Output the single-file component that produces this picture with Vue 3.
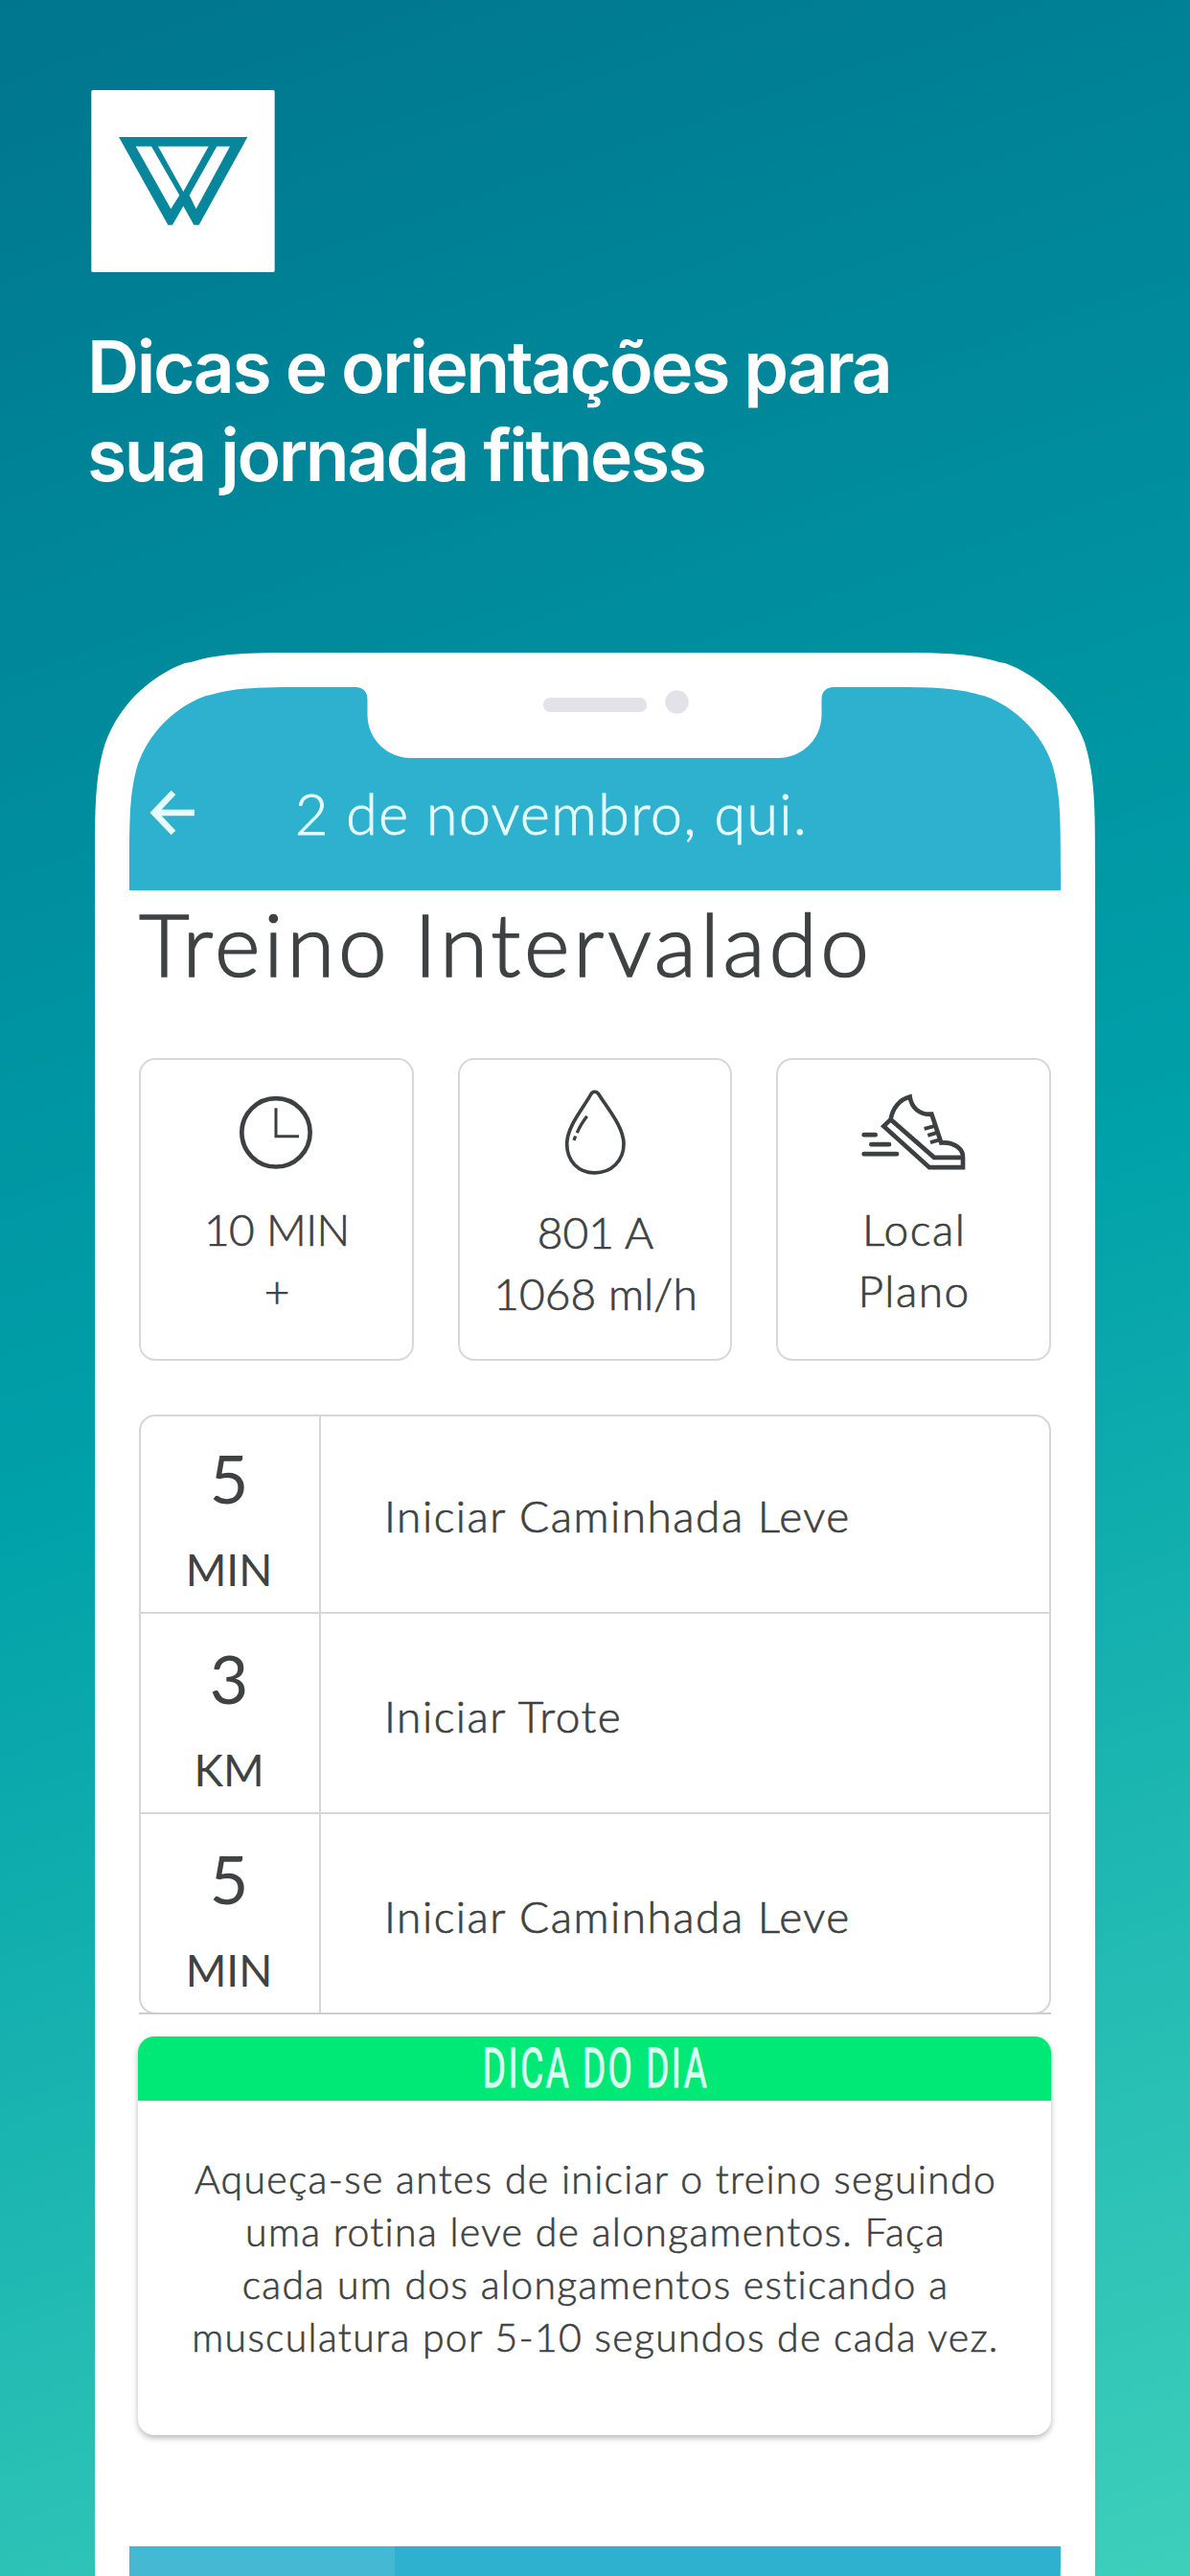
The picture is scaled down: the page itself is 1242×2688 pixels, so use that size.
<template>
  <div class="page">
    <header class="intro">
      <svg class="logo" viewBox="0 0 574 570">
        <rect width="574" height="570" rx="5" fill="#fff" />
        <path
          fill="#08869b"
          fill-rule="evenodd"
          d="M86 147H489L337 422H321L288 363L254 422H240ZM139 176L249 372L276 329L188 176ZM209 176L288 318L367 176ZM393 176L307 329L328 372L434 176Z"
        />
      </svg>
      <h1 class="headline">Dicas e orientações para<br />sua jornada fitness</h1>
    </header>

    <div class="phone">
      <div class="screen">
        <div class="top-bar">
          <svg class="back" viewBox="0 0 48 48">
            <path d="M24 3L4 24L24 45M4 24H46" />
          </svg>
          <span class="date">2 de novembro, qui.</span>
        </div>
        <svg class="notch" viewBox="0 0 499 75">
          <path d="M0 -1V0C8 0 12.500 5 12.500 13V29C12.500 54 33 74 58 74H441C466 74 486.500 54 486.500 29V13C486.500 5 491 0 499 0V-1Z" fill="#fff" />
          <rect x="196" y="11" width="108" height="15" rx="7" fill="#e3e2e8" />
          <circle cx="335.500" cy="15.500" r="12.200" fill="#e3e2e8" />
        </svg>

        <main class="content">
          <h2 class="title">Treino Intervalado</h2>

          <div class="cards">
            <div v-for="card in cards" :key="card.icon" :class="['card', card.icon]">
              <svg v-if="card.icon === 'clock'" class="card-icon" viewBox="0 0 360 290">
                <circle cx="180" cy="146" r="107" stroke-width="14" />
                <path d="M180 69V158H252" stroke-width="9" />
              </svg>
              <svg v-else-if="card.icon === 'drop'" class="card-icon" viewBox="0 0 360 290">
                <path d="M166 28C173 15 185 15 193 28C215 65 270 127 270 182C270 235 230 272 179 272C128 272 92 235 92 182C92 127 145 67 166 28Z" stroke-width="11" />
                <path d="M155 95Q134 122 124 147M119 157L114 170" stroke-width="10" />
              </svg>
              <svg v-else class="card-icon" viewBox="0 0 360 290">
                <path d="M23 153H59M46 183H102M23 213H126" stroke-width="14" stroke-linecap="round" />
                <path d="M107 105C112 70 135 42 167 34C172 70 200 92 235 88L265 178C308 174 335 200 333 225V255H228L85 126L107 105L243 224H333" stroke-width="14" />
                <path d="M212 134L243 126M223 155L252 146M231 177L262 168" stroke-width="12" />
              </svg>
              <span v-for="line in card.lines" :key="line" class="card-line">{{ line }}</span>
            </div>
          </div>

          <div class="steps">
            <div v-for="(step, i) in steps" :key="i" class="step">
              <div class="amount">
                <span class="value">{{ step.value }}</span>
                <span class="unit">{{ step.unit }}</span>
              </div>
              <div class="label">{{ step.label }}</div>
            </div>
          </div>
          <div class="divider"></div>

          <section class="tip">
            <div class="tip-title"><span>DICA DO DIA</span></div>
            <p class="tip-text">
              Aqueça-se antes de iniciar o treino seguindo<br />
              uma rotina leve de alongamentos. Faça<br />
              cada um dos alongamentos esticando a<br />
              musculatura por 5-10 segundos de cada vez.
            </p>
          </section>
        </main>

        <nav class="tabs">
          <div class="tab active"></div>
        </nav>
      </div>
    </div>
  </div>
</template>

<script setup>
const cards = [
  { icon: 'clock', lines: ['10 MIN', '+'] },
  { icon: 'drop', lines: ['801 A', '1068 ml/h'] },
  { icon: 'shoe', lines: ['Local', 'Plano'] }
];

const steps = [
  { value: 5, unit: 'MIN', label: 'Iniciar Caminhada Leve' },
  { value: 3, unit: 'KM', label: 'Iniciar Trote' },
  { value: 5, unit: 'MIN', label: 'Iniciar Caminhada Leve' }
];
</script>

<style>
body {
  margin: 0;
}
</style>

<style scoped>
.page {
  width: 1242px;
  height: 2688px;
  overflow: hidden;
  background: linear-gradient(161deg, #00758e 0%, #00a1a9 51%, #3fd0bb 101%);
  font-family: Lato, "Open Sans", sans-serif;
  color: #3e4242;
}

.intro {
  height: 681px;
  box-sizing: border-box;
  padding: 94px 0 0 95px;
}

.logo {
  display: block;
  width: 192px;
  height: 190px;
}

.headline {
  margin: 53px 0 0 -4px;
  font-family: Inter, sans-serif;
  font-weight: 600;
  font-size: 75px;
  line-height: 92px;
  letter-spacing: -2.45px;
  color: #fff;
}

/* body and screen both use a continuous-curvature corner */
.phone {
  width: 1044px;
  height: 2194px;
  box-sizing: border-box;
  margin-left: 99px;
  padding: 36px;
  background: #fff;
  clip-path: path("M228 0H816C882 0 914 0 944 10L950 11C988 25 1019 56 1033 94C1044 129 1044 162 1044 228V1966C1044 2032 1044 2065 1033 2100C1019 2138 988 2169 950 2183H94C56 2169 25 2138 11 2100C0 2065 0 2032 0 1966V228C0 162 0 129 11 94C25 56 56 25 94 11L100 10C130 0 162 0 228 0Z");
}

.screen {
  position: relative;
  display: flex;
  flex-direction: column;
  height: 2122px;
  clip-path: path("M194 0H778C834 0 861 0 887 8L892 9C925 21 951 47 963 80C972 110 972 138 972 194V1928C972 1984 972 2012 963 2042C951 2075 925 2101 892 2113H80C47 2101 21 2075 9 2042C0 2012 0 1984 0 1928V194C0 138 0 110 9 80C21 47 47 21 80 9L85 8C111 0 138 0 194 0Z");
}

.top-bar {
  display: flex;
  align-items: flex-start;
  height: 212px;
  box-sizing: border-box;
  padding: 93px 0 0 22px;
  background: #2db1ce;
  color: #e6fcff;
}

.back {
  width: 48px;
  height: 48px;
  margin-top: 14px;
  fill: none;
  stroke: #e6fcff;
  stroke-width: 6.5;
}

.date {
  margin-left: 103px;
  font-weight: 300;
  font-size: 59px;
  line-height: 78px;
  letter-spacing: 1.5px;
  -webkit-text-stroke: 0.9px currentColor;
}

.notch {
  position: absolute;
  top: 0;
  left: 236px;
  width: 499px;
  height: 75px;
}

.content {
  padding: 0 10px;
}

.title {
  margin: 0;
  height: 175px;
  font-weight: 300;
  font-size: 91px;
  line-height: 109px;
  letter-spacing: 3.8px;
  word-spacing: -4px;
  white-space: nowrap;
  -webkit-text-stroke: 1.6px currentColor;
}

.cards {
  display: grid;
  grid-template-columns: repeat(3, 1fr);
  gap: 46px;
}

.card {
  display: flex;
  flex-direction: column;
  align-items: center;
  height: 316px;
  box-sizing: border-box;
  padding-top: 27px;
  border: 2px solid #d8d8d8;
  border-radius: 17px;
}

.card-icon {
  width: 120px;
  height: 97px;
  margin-bottom: 21px;
  fill: none;
  stroke: #3c4040;
}

.drop .card-icon {
  margin-bottom: 24px;
}

.card-line {
  padding-left: 1px;
  font-weight: 300;
  font-size: 46px;
  line-height: 64px;
  letter-spacing: 1.5px;
  -webkit-text-stroke: 0.7px currentColor;
}

.clock .card-line {
  letter-spacing: -0.6px;
  word-spacing: 1px;
}

.drop .card-line {
  letter-spacing: 0.1px;
}

.steps {
  margin-top: 56px;
  border: 2px solid #d6d6d6;
  border-radius: 17px;
  overflow: hidden;
}

.step {
  display: flex;
  height: 207px;
  border-bottom: 2px solid #d6d6d6;
}

.step:first-child {
  height: 204px;
}

.step:last-child {
  border-bottom: 0;
}

.amount {
  display: flex;
  flex-direction: column;
  align-items: center;
  width: 188px;
  box-sizing: border-box;
  padding-top: 19px;
  padding-right: 2px;
  border-right: 2px solid #d6d6d6;
}

.value {
  font-size: 70px;
  line-height: 90px;
}

.unit {
  margin-top: 7px;
  font-size: 46px;
  line-height: 88px;
}

.label {
  padding-left: 66px;
  font-weight: 300;
  font-size: 46px;
  line-height: 207px;
  letter-spacing: 1.5px;
  -webkit-text-stroke: 0.7px currentColor;
}

.step:not(:first-child) .amount {
  padding-top: 22px;
}

.step:not(:first-child) .label {
  padding-top: 5px;
  line-height: 203px;
}

.divider {
  height: 2px;
  margin-top: -2px;
  background: #cdcdcd;
}

.tip {
  margin: 23px 0 0 -1px;
  height: 416px;
  width: 953px;
  border-radius: 17px;
  box-shadow: 0 3px 6px rgba(0, 0, 0, 0.28);
}

.tip-title {
  display: flex;
  justify-content: center;
  height: 67px;
  border-radius: 17px 17px 0 0;
  background: #00e977;
  color: #dcfff0;
  font-family: Roboto, sans-serif;
  font-size: 58px;
  line-height: 66px;
}

.tip-title span {
  padding-left: 6px;
  letter-spacing: 4px;
  transform: scaleX(0.635);
  -webkit-text-stroke: 1px currentColor;
}

.tip-text {
  margin: 54px 0 0;
  padding-left: 2px;
  text-align: center;
  font-weight: 300;
  font-size: 41px;
  line-height: 55px;
  letter-spacing: 1.3px;
  white-space: nowrap;
  -webkit-text-stroke: 0.6px currentColor;
}

.tabs {
  display: flex;
  flex: 1;
  margin-top: 116px;
  background: #2db1ce;
}

.tab.active {
  width: 277px;
  background: #45b9d3;
}
</style>
